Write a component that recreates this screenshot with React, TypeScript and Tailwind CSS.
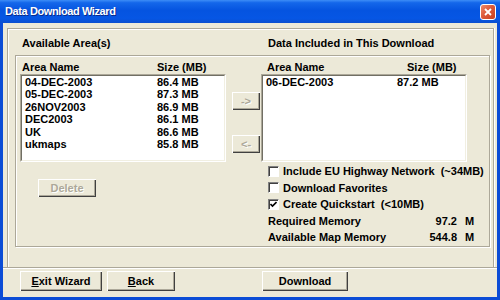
import React from 'react';

const available = [
  { name: '04-DEC-2003', size: '86.4 MB' },
  { name: '05-DEC-2003', size: '87.3 MB' },
  { name: '26NOV2003', size: '86.9 MB' },
  { name: 'DEC2003', size: '86.1 MB' },
  { name: 'UK', size: '86.6 MB' },
  { name: 'ukmaps', size: '85.8 MB' },
];

const included = [{ name: '06-DEC-2003', size: '87.2 MB' }];

// classic raised 3d button
const Btn: React.FC<{ className?: string; disabled?: boolean; children: React.ReactNode }> = ({
  className = '',
  disabled = false,
  children,
}) => (
  <div
    className={`flex items-center justify-center bg-[#ECE9D8] shadow-[inset_1px_1px_0_#fff,inset_-1px_-1px_0_#404040,inset_-2px_-2px_0_#ACA899] ${
      disabled ? 'text-[#ACA899] [text-shadow:1px_1px_0_#fff]' : 'text-black'
    } ${className}`}
  >
    {children}
  </div>
);

const ListBox: React.FC<{ items: { name: string; size: string }[]; col: string }> = ({ items, col }) => (
  <div className="h-[88px] border border-t-[#ACA899] border-l-[#ACA899] border-r-white border-b-white">
    <div className="h-full bg-white border border-t-[#716F64] border-l-[#716F64] border-r-[#F1EFE2] border-b-[#F1EFE2] pl-[3px]">
      {items.map((it) => (
        <div key={it.name} className="flex leading-[12.4px]">
          <span className={col}>{it.name}</span>
          <span>{it.size}</span>
        </div>
      ))}
    </div>
  </div>
);

const Check: React.FC<{ checked?: boolean; label: string }> = ({ checked = false, label }) => (
  <div className="flex items-center h-[16.5px] pl-[7px]">
    <div className="shrink-0 w-[11px] h-[11px] bg-white border border-t-[#808080] border-l-[#808080] border-r-white border-b-white shadow-[inset_1px_1px_0_#404040] flex items-center justify-center">
      {checked && (
        <svg width="7" height="7" viewBox="0 0 7 7">
          <path d="M0.5 3 L2.5 5 L6.5 1" stroke="#000" strokeWidth="1.6" fill="none" />
        </svg>
      )}
    </div>
    <span className="ml-[4px] whitespace-pre">{label}</span>
  </div>
);

const MemRow: React.FC<{ label: string; value: string }> = ({ label, value }) => (
  <div className="flex items-center h-[16.5px] w-[215px] pl-[7px]">
    <span className="flex-1">{label}</span>
    <span className="text-right">{value}</span>
    <span className="ml-[8px] w-[11px]">M</span>
  </div>
);

export default function App() {
  return (
    <div className="w-[500px] h-[300px] bg-[#0B4CD6] flex flex-col overflow-hidden font-['Liberation_Sans',Arial,sans-serif] font-bold text-[11px] text-black select-none">
      {/* title bar */}
      <div className="h-[23px] shrink-0 flex items-center justify-between pl-[5px] pr-[4px] bg-[linear-gradient(to_bottom,#3D8DF7_0%,#1467EA_12%,#0554E0_45%,#0656E4_80%,#0A4FD0_100%)]">
        <span className="text-white tracking-[-0.4px] [text-shadow:1px_1px_0_#0A2A8A]">Data Download Wizard</span>
        <div className="w-[16px] h-[16px] rounded-[3px] border border-white bg-[linear-gradient(135deg,#EE8A6A_0%,#DD5A3A_45%,#C8401F_100%)] flex items-center justify-center">
          <svg width="8" height="8" viewBox="0 0 8 8">
            <path d="M1 1 L7 7 M7 1 L1 7" stroke="#fff" strokeWidth="1.8" />
          </svg>
        </div>
      </div>

      {/* client area */}
      <div className="mx-[3px] mb-[3px] flex-1 bg-[#ECE9D8] flex flex-col">
        <div className="ml-[4px] mt-[5px] w-[487px] h-[239px] border border-b-0 border-[#ACA899] shadow-[inset_1px_1px_0_#fff,1px_0_0_#fff]">
          <div className="h-[26px] flex pt-[8px] leading-[13px]">
            <span className="ml-[14px] w-[246px]">Available Area(s)</span>
            <span>Data Included in This Download</span>
          </div>

          <div className="ml-[7px] w-[475px] h-[192px] border border-[#ACA899] shadow-[inset_1px_1px_0_#fff,1px_1px_0_#fff] flex">
            {/* left column */}
            <div className="ml-[4px] w-[206px] shrink-0 flex flex-col">
              <div className="pt-[5px] h-[18px] flex leading-[13px]">
                <span className="pl-[2px] w-[137px]">Area Name</span>
                <span>Size (MB)</span>
              </div>
              <ListBox items={available} col="w-[132px]" />
              <Btn disabled className="mt-[17px] ml-[18px] w-[58px] h-[18px]">
                Delete
              </Btn>
            </div>

            {/* move buttons */}
            <div className="ml-[6px] w-[28px] shrink-0 flex flex-col">
              <Btn disabled className="mt-[36px] h-[18px]">
                -&gt;
              </Btn>
              <Btn disabled className="mt-[25px] h-[18px]">
                &lt;-
              </Btn>
            </div>

            {/* right column */}
            <div className="ml-[1px] w-[206px] shrink-0 flex flex-col">
              <div className="pt-[5px] h-[18px] flex leading-[13px]">
                <span className="pl-[6px] w-[146px]">Area Name</span>
                <span>Size (MB)</span>
              </div>
              <ListBox items={included} col="w-[131px]" />
              <div className="mt-[1px]">
                <Check label="Include EU Highway Network  (~34MB)" />
                <Check label="Download Favorites" />
                <Check checked label="Create Quickstart  (<10MB)" />
                <MemRow label="Required Memory" value="97.2" />
                <MemRow label="Available Map Memory" value="544.8" />
              </div>
            </div>
          </div>
        </div>

        {/* separator */}
        <div className="h-[2px] border-t border-[#ACA899] bg-white" />

        <div className="mt-[2px] flex">
          <Btn className="ml-[17px] w-[82px] h-[20px]">
            <span>
              <span className="underline">E</span>xit Wizard
            </span>
          </Btn>
          <Btn className="ml-[5px] w-[68px] h-[20px]">
            <span>
              <span className="underline">B</span>ack
            </span>
          </Btn>
          <Btn className="ml-[87px] w-[86px] h-[20px]">Download</Btn>
        </div>
      </div>
    </div>
  );
}
